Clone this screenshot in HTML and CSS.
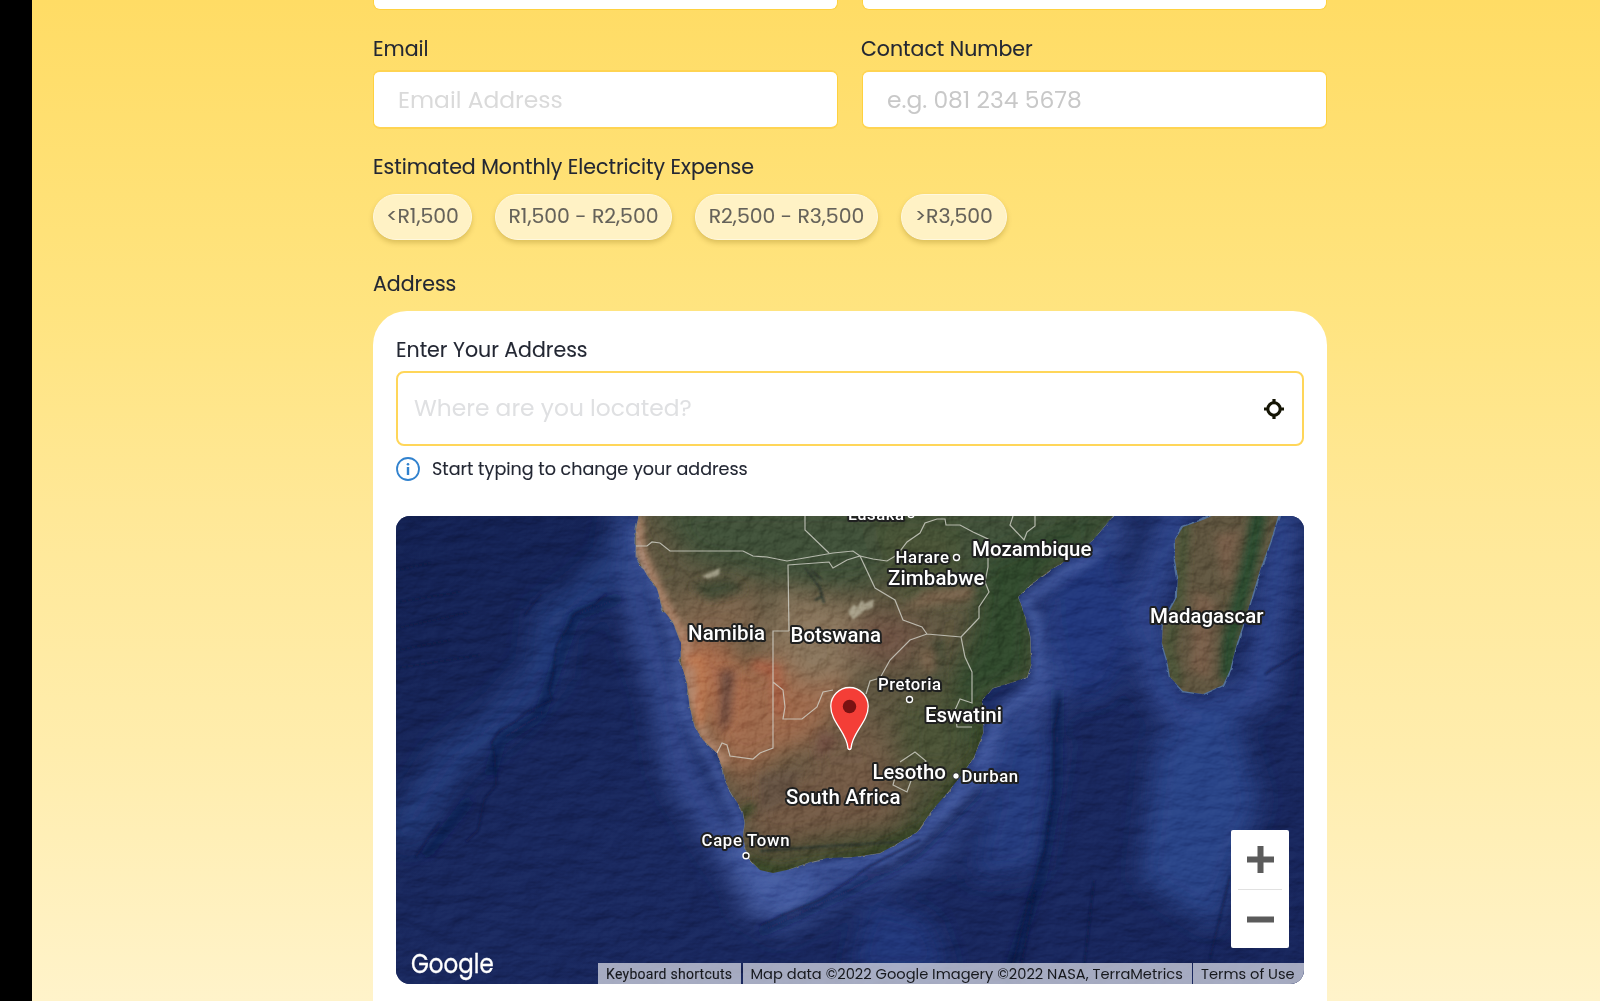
FILE: index.html
```
<!DOCTYPE html>
<html lang="en">
<head>
<meta charset="utf-8">
<title>Solar quote</title>
<link rel="stylesheet" href="styles.css">
</head>
<body>
<div class="shell">
<main class="page">
<form class="form">
  <div class="row">
    <div class="stub"></div>
    <div class="stub"></div>
  </div>
  <div class="row contact">
    <div class="field">
      <label class="label" for="email">Email</label>
      <input class="input" id="email" type="text" placeholder="Email Address">
    </div>
    <div class="field">
      <label class="label label-phone" for="phone">Contact Number</label>
      <input class="input input-phone" id="phone" type="text" placeholder="e.g. 081 234 5678">
    </div>
  </div>
  <div class="label expense">Estimated Monthly Electricity Expense</div>
  <div class="pills">
    <button type="button" class="pill p1">&lt;R1,500</button>
    <button type="button" class="pill p2">R1,500 - R2,500</button>
    <button type="button" class="pill p3">R2,500 - R3,500</button>
    <button type="button" class="pill p4">&gt;R3,500</button>
  </div>
  <div class="label address">Address</div>
  <section class="card">
    <label class="label" for="place">Enter Your Address</label>
    <div class="search">
      <input class="search-input" id="place" type="text" placeholder="Where are you located?">
      <svg class="locate" viewBox="0 0 22 22"><circle cx="11" cy="11" r="6.2" fill="none" stroke="#151505" stroke-width="3.1"/><path d="M11 1v4M11 17v4M1 11h4M17 11h4" stroke="#151505" stroke-width="3.2"/></svg>
    </div>
    <div class="hint">
      <svg class="info" viewBox="0 0 24 24"><circle cx="12" cy="12" r="11" fill="none" stroke="#3182ce" stroke-width="1.8"/><path d="M12 10v8" stroke="#3182ce" stroke-width="2.4"/><circle cx="12" cy="7.2" r="1.3" fill="#3182ce"/></svg>
      <span>Start typing to change your address</span>
    </div>
    <div class="map">
      <svg class="terrain" viewBox="396 516 908 468">
        <defs>
          <linearGradient id="sea" x1="0" y1="0" x2="1" y2="1"><stop offset="0" stop-color="#142254"/><stop offset=".5" stop-color="#1a2960"/><stop offset="1" stop-color="#18265d"/></linearGradient>
          <filter id="b4" x="-30%" y="-30%" width="160%" height="160%"><feGaussianBlur stdDeviation="4"/></filter>
          <filter id="b12" x="-50%" y="-50%" width="200%" height="200%"><feGaussianBlur stdDeviation="12"/></filter>
          <filter id="b2" x="-30%" y="-30%" width="160%" height="160%"><feGaussianBlur stdDeviation="1.1"/></filter>
          <filter id="relief" x="0" y="0" width="100%" height="100%" color-interpolation-filters="sRGB"><feTurbulence type="fractalNoise" baseFrequency=".03 .06" numOctaves="5" seed="8"/><feDiffuseLighting surfaceScale="4" lighting-color="#fff" diffuseConstant=".58"><feDistantLight azimuth="235" elevation="55"/></feDiffuseLighting></filter>
          <filter id="rough" x="0" y="0" width="100%" height="100%" color-interpolation-filters="sRGB"><feTurbulence type="fractalNoise" baseFrequency=".08" numOctaves="5" seed="21"/><feDiffuseLighting surfaceScale="4" lighting-color="#fff" diffuseConstant=".56"><feDistantLight azimuth="235" elevation="55"/></feDiffuseLighting></filter>
          <filter id="jag" x="-5%" y="-5%" width="110%" height="110%" color-interpolation-filters="sRGB"><feTurbulence type="fractalNoise" baseFrequency=".09" numOctaves="3" seed="4"/><feDisplacementMap in="SourceGraphic" scale="5" xChannelSelector="R" yChannelSelector="G"/></filter>
          <path id="africa" d="M640 510 636 530 636 557 645 572 657 588 663 610 673 622 681 643 681 663 687 683 690 707 695 727 703 740 717 753 723 770 727 785 737 802 743 812 745 823 743 837 747 853 751 861 760 870 773 873 787 870 810 862 827 858 853 857 880 853 893 846 917 832 930 813 947 793 960 777 974 757 983 733 982 700 993 688 1010 683 1027 677 1031 665 1030 637 1025 617 1018 597 1030 585 1050 570 1067 560 1093 540 1118 510Z"/>
          <path id="isle" d="M1203 520 1183 527 1175 540 1175 560 1178 577 1177 597 1163 623 1162 643 1167 660 1170 677 1183 691 1203 694 1223 685 1230 670 1237 643 1247 613 1260 570 1270 543 1280 510 1225 510Z"/>
          <clipPath id="land"><use href="#africa"/><use href="#isle"/></clipPath>
        </defs>
        <rect x="396" y="516" width="908" height="468" fill="url(#sea)"/>
        <g filter="url(#b12)">
          <path d="M632 505 622 560 580 600 550 620 545 670 500 720 450 760 400 840" fill="none" stroke="#2b4689" stroke-width="34" opacity=".7"/>
          <path d="M636 510 640 610 668 700 680 770 730 850 780 915 850 880 930 850 990 750 1050 690 1060 600 1120 520" fill="none" stroke="#344b8f" stroke-width="34"/>
          <path d="M720 820 745 915 790 915 830 875Z" fill="#455ba0"/>
          <path d="M1180 505 1145 610 1160 690 1190 720 1260 690 1285 510" fill="none" stroke="#304890" stroke-width="30"/>
          <path d="M1010 720 1060 740 1040 870 970 880Z" fill="#263d80"/>
          <path d="M1155 740 1230 700 1260 800 1215 930 1140 880Z" fill="#2c4589"/>
          <path d="M870 900 930 920 950 975 850 975Z" fill="#22397c"/>
          <ellipse cx="1090" cy="620" rx="40" ry="80" fill="#22387d"/>
        </g>
        <g filter="url(#b4)">
          <path d="M636 530 657 590 676 640 684 710 712 760 740 820 748 865 790 900 812 870 890 856 945 810 980 770 1000 715 1040 680 1036 620 1022 602 1100 550" fill="none" stroke="#455da2" stroke-width="13" opacity=".8"/>
          <path d="M760 932 850 890 920 850 980 790M1058 690 1056 790 1040 880 1005 984M620 598 575 615 555 670 540 715 500 740 490 775M470 800 425 855" fill="none" stroke="#101c49" stroke-width="5"/>
        </g>
        <rect class="seabed" x="396" y="516" width="908" height="468" filter="url(#relief)"/>
        <g filter="url(#b2)" fill="none" stroke="#101a42" stroke-width="1.5" opacity=".85">
          <path d="M606 594 596 604 582 610 574 614 568 628 557 645 555 658 553 675 549 690 552 700 540 706 528 711 515 722 500 730 492 742 495 758 496 785 484 800 478 830 466 842M440 822 428 838 415 858M524 616 533 604 542 594M1060 700 1054 730 1054 790 1045 850 1030 895 1008 984M760 926 790 912 820 900 850 880 870 866 920 840M1035 890 1018 984M1094 880 1082 984M1230 876 1210 958M1265 674 1304 650M398 570 430 563M398 602 460 592M398 628 470 612M398 650 450 640M398 668 480 655"/>
        </g>
        <g filter="url(#jag)"><use href="#africa" fill="#5e5641" stroke="#747c84" stroke-width="1"/><use href="#isle" fill="#635a45" stroke="#53719a" stroke-width="2.500"/></g>
        <g clip-path="url(#land)">
          <path d="M630 505H1130V600L990 760 900 860 740 880Z" fill="#605842"/>
          <path d="M1160 505H1285L1235 700H1160Z" fill="#625842"/>
          <g filter="url(#b12)">
            <path d="M650 500H1130V560H1030L960 590 920 565 860 590 800 590 690 560Z" fill="#43523a"/>
            <path d="M870 520 960 530 960 600 900 600Z" fill="#4c5438"/>
            <path d="M985 560 1120 500 1040 590 1035 680 985 700 985 740 950 790 925 730 970 640Z" fill="#304b2e"/>
            <path d="M676 640 700 620 770 690 790 720 745 760 715 750Z" fill="#ae704f"/>
            <path d="M765 650 820 640 850 690 810 740 730 780 720 750Z" fill="#a06d50"/>
            <path d="M780 590 860 610 880 660 810 690 770 650Z" fill="#8c785e"/>
            <path d="M660 600 750 590 770 640 690 640Z" fill="#80674f"/>
            <path d="M800 740 870 710 900 780 820 800Z" fill="#755f49"/>
            <path d="M730 780 880 760 900 820 760 850Z" fill="#745c46"/>
            <path d="M870 610 930 625 900 670 840 650Z" fill="#725747"/>
            <path d="M900 700 960 690 965 770 900 780Z" fill="#4e5437"/>
            <path d="M740 862 900 838 950 788" fill="none" stroke="#35472a" stroke-width="18"/>
          </g>
          <g filter="url(#b4)">
            <path d="M638 516 640 550 665 605 685 640 690 690 703 735 725 765" fill="none" stroke="#c39378" stroke-width="8"/>
            <path d="M686 660 700 660 702 690 700 725" fill="none" stroke="#c07b53" stroke-width="10"/>
            <path d="M720 670 735 670 730 720 720 735ZM820 730 840 740 815 760Z" fill="#714f43"/>
            <path d="M752 665 775 670 780 715" fill="none" stroke="#aa6548" stroke-width="12"/>
            <path d="M760 775 800 770 790 800 760 815Z" fill="#675544"/>
            <path d="M690 585 730 578 745 590 710 600ZM935 640 945 640 940 690 930 680Z" fill="#434b36"/>
            <path d="M925 590 975 585 970 600 900 612ZM918 650 935 650 935 675 922 668Z" fill="#7c6650"/>
            <path d="M750 865 780 872 870 855 925 828 980 750 984 700M735 818 755 805" fill="none" stroke="#304522" stroke-width="8"/>
            <path d="M1260 510 1248 570 1230 640 1228 680" fill="none" stroke="#2c4d31" stroke-width="15"/>
            <path d="M1185 520 1178 600 1168 650 1178 685" fill="none" stroke="#4a5638" stroke-width="10"/>
            <path d="M1195 590 1215 600 1210 680 1190 670ZM1215 535 1240 530 1225 590Z" fill="#79604c"/>
          </g>
          <path d="M702 576 720 568 719 575 708 579ZM848 612 854 604 857 608 862 599 864 604 874 599 873 608 865 610 853 620Z" fill="#c1bda7" opacity=".7" filter="url(#b2)"/>
          <path d="M805 568 820 588 824 603M811 570 822 580M815 600 823 596M760 851 830 846 900 842" stroke="#353d31" stroke-width="2.500" fill="none" filter="url(#b2)"/>
          <rect class="ground" x="630" y="510" width="660" height="370" filter="url(#rough)"/>
        </g>
        <g class="borders">
          <path d="M636 546H647L652 542 660 543 670 551H743L753 556 767 557 787 561 833 553 853 551 860 556 873 559 887 561 897 555 907 542 920 533 925 523 937 519H945L946 525H960L973 532 988 539V567L985 582 989 592 979 607V618L961 637"/>
          <path d="M805 516V530L829 553M789 631 788 565 829 562 833 568 847 560 860 556 875 588 895 600 903 620 922 627 927 634 961 637 965 657 972 672V703L960 699 955 710 957 727H972M789 631H773V748L760 753 753 759 730 756 727 745 722 743 717 753M773 682 783 690 785 707 783 719H802L817 707 823 692 833 690M866 694 870 681 880 678 890 660 910 640 927 634M1013 516 1010 525 1024 540 1027 532 1035 526V516M900 762 915 752 926 761 912 778 907 792 893 785 898 766"/>
        </g>
        <g class="city-dots"><circle cx="911" cy="514.5" r="3"/><circle cx="956.5" cy="557.5" r="3"/><circle cx="909.5" cy="699.5" r="3"/><circle cx="746" cy="855.7" r="3"/><circle class="solid" cx="956" cy="776" r="3.3"/></g>
        <g class="country">
          <text x="972" y="555.500" textLength="119.5">Mozambique</text>
          <text x="888" y="584.500" textLength="96.5">Zimbabwe</text>
          <text x="688" y="640" textLength="77">Namibia</text>
          <text x="790.5" y="641.5" textLength="90.5">Botswana</text>
          <text x="1150" y="622.5" textLength="113.5">Madagascar</text>
          <text x="925" y="721.5" textLength="77">Eswatini</text>
          <text x="872.5" y="779" textLength="73.5">Lesotho</text>
          <text x="786" y="803.5" textLength="114.5">South Africa</text>
        </g>
        <g class="city">
          <text x="848" y="520" textLength="56">Lusaka</text>
          <text x="895.5" y="562.500" textLength="53.500">Harare</text>
          <text x="878" y="690" textLength="63">Pretoria</text>
          <text x="961.5" y="782" textLength="56.5">Durban</text>
          <text x="701.5" y="846" textLength="88">Cape Town</text>
        </g>
        <path d="M848 748.5C847.5 733 830.8 722.5 830.8 706.2A18.7 18.7 0 0 1 868.2 706.2C868.2 722.5 851.5 733 851 748.5Q849.5 750.5 848 748.5Z" fill="#f43e37" stroke="#fff" stroke-width="1.3"/>
        <circle cx="849.5" cy="706.5" r="6.7" fill="#7a1212"/>
      </svg>
      <div class="brand">Google</div>
      <div class="zoom">
        <button type="button" class="zoom-btn"><svg viewBox="0 0 27 27"><path d="M13.5 0v27M0 13.5h27" stroke="#5b5b5b" stroke-width="6"/></svg></button>
        <button type="button" class="zoom-btn"><svg viewBox="0 0 27 27"><path d="M0 13.5h27" stroke="#5b5b5b" stroke-width="6"/></svg></button>
      </div>
      <div class="credits">
        <span class="keys">Keyboard shortcuts</span>
        <span class="data">Map data ©2022 Google Imagery ©2022 NASA, TerraMetrics</span>
        <span class="terms">Terms of Use</span>
      </div>
    </div>
  </section>
</form>
</main>
</div>
</body>
</html>
```
FILE: styles.css
```
* { box-sizing: border-box; }
html { background: #fff; }
body { margin: 0; font-family: Poppins, Inter, sans-serif; color: #232733; overflow: hidden; }
.shell { height: 1001px; padding-left: 32px; background: #000; overflow: hidden; }
.page { height: 1001px; background: linear-gradient(#ffdc65, #ffe480 31%, #ffe897 51%, #ffedad 75%, #fff3ca); }
.form { width: 954px; margin-left: 341px; }
.row { display: grid; grid-template-columns: 1fr 1fr; gap: 24px; }
.stub { height: 10px; background: #fff; border: 1px solid #ffd13f; border-top: 0; border-radius: 0 0 7px 7px; }
.contact { padding-top: 27px; }
.label { display: block; font-size: 20.5px; line-height: 24px; white-space: nowrap; -webkit-text-stroke: .1px; }
.input { display: block; width: 100%; height: 59px; margin-top: 9px; padding: 0 24px; border: 1px solid #ffd13f; border-width: 2px 1px; border-top-color: #ffd452; border-bottom-color: #ffd452; border-radius: 7px; background: #fff; font: 23.4px Poppins, Inter, sans-serif; outline: 0; }
.label-phone { margin-left: -1px; }
.input::placeholder, .search-input::placeholder { opacity: 1; color: #dadada; }
.input-phone::placeholder { color: #c8c8c8; }
.expense { margin-top: 26px; }
.pills { display: flex; gap: 23px; margin-top: 15px; }
.pill { height: 46px; padding: 0 0 2px; border: 1.5px solid #fff8df; border-radius: 23px; background: #fff2c5; box-shadow: 0 3px 5px rgba(120, 90, 0, .25); color: #65625a; font: 20.4px Poppins, Inter, sans-serif; text-align: center; white-space: nowrap; -webkit-text-stroke: .1px; }
.p1 { width: 99px; }
.p2 { width: 177px; }
.p3 { width: 183px; }
.p4 { width: 106px; }
.address { margin-top: 32px; }
.card { height: 720px; margin-top: 15px; padding: 27px 23px; border-radius: 34px 34px 0 0; background: #fff; }
.search { display: flex; align-items: center; height: 75px; margin-top: 9px; padding: 0 17px 0 16px; border: 2px solid #ffd659; border-radius: 8px; }
.search-input { flex: 1; border: 0; outline: 0; padding: 0 0 2px; background: none; font: 23.35px Poppins, Inter, sans-serif; }
.search-input::placeholder { color: #dfe0e2; }
.locate { width: 22px; height: 22px; }
.hint { display: flex; align-items: center; gap: 12px; height: 24px; margin-top: 11px; font-size: 17.55px; -webkit-text-stroke: .1px; }
.info { width: 24px; height: 24px; }
.map { position: relative; height: 468px; margin-top: 35px; border-radius: 14px; overflow: hidden; background: #18265d; }
.terrain { display: block; width: 908px; height: 468px; }
.seabed { mix-blend-mode: soft-light; opacity: .5; }
.ground { mix-blend-mode: soft-light; opacity: .5; }
.borders { fill: none; stroke: #d3d3ca; stroke-width: 1.2; opacity: .8; }
.city-dots { fill: #222; stroke: #fff; stroke-width: 1.4; }
.city-dots .solid { fill: #fff; stroke: #222; stroke-width: 1; }
.country, .city { fill: #fff; stroke: #1f2020; stroke-width: 4px; stroke-linejoin: round; paint-order: stroke; font-family: Roboto, sans-serif; font-weight: 500; font-size: 20.5px; }
.city { font-size: 16.8px; }
.brand { position: absolute; left: 15px; bottom: 4px; color: #fff; font: 400 27px/32px Poppins, Lato, sans-serif; transform: scaleX(.85); transform-origin: left; -webkit-text-stroke: .3px #fff; text-shadow: 0 0 2px #26345f; }
.zoom { position: absolute; right: 15px; top: 314px; width: 58px; height: 118px; padding: 0 7px; background: #fff; border-radius: 2px; }
.zoom-btn { display: grid; place-items: center; width: 100%; height: 59px; padding: 0; border: 0; background: none; }
.zoom-btn + .zoom-btn { border-top: 1px solid #e1e1e1; }
.zoom-btn svg { width: 27px; height: 27px; }
.credits { position: absolute; right: 0; bottom: 0; display: flex; gap: 1.5px; height: 21px; font-size: 14.63px; line-height: 22px; color: #16181d; white-space: nowrap; }
.credits span { background: rgba(210, 213, 225, .76); padding-left: 8px; }
.credits .keys { width: 143px; font: 14px/22px Roboto, sans-serif; letter-spacing: .27px; -webkit-text-stroke: .1px; }
.data { width: 449px; }
.terms { width: 111px; }
```
